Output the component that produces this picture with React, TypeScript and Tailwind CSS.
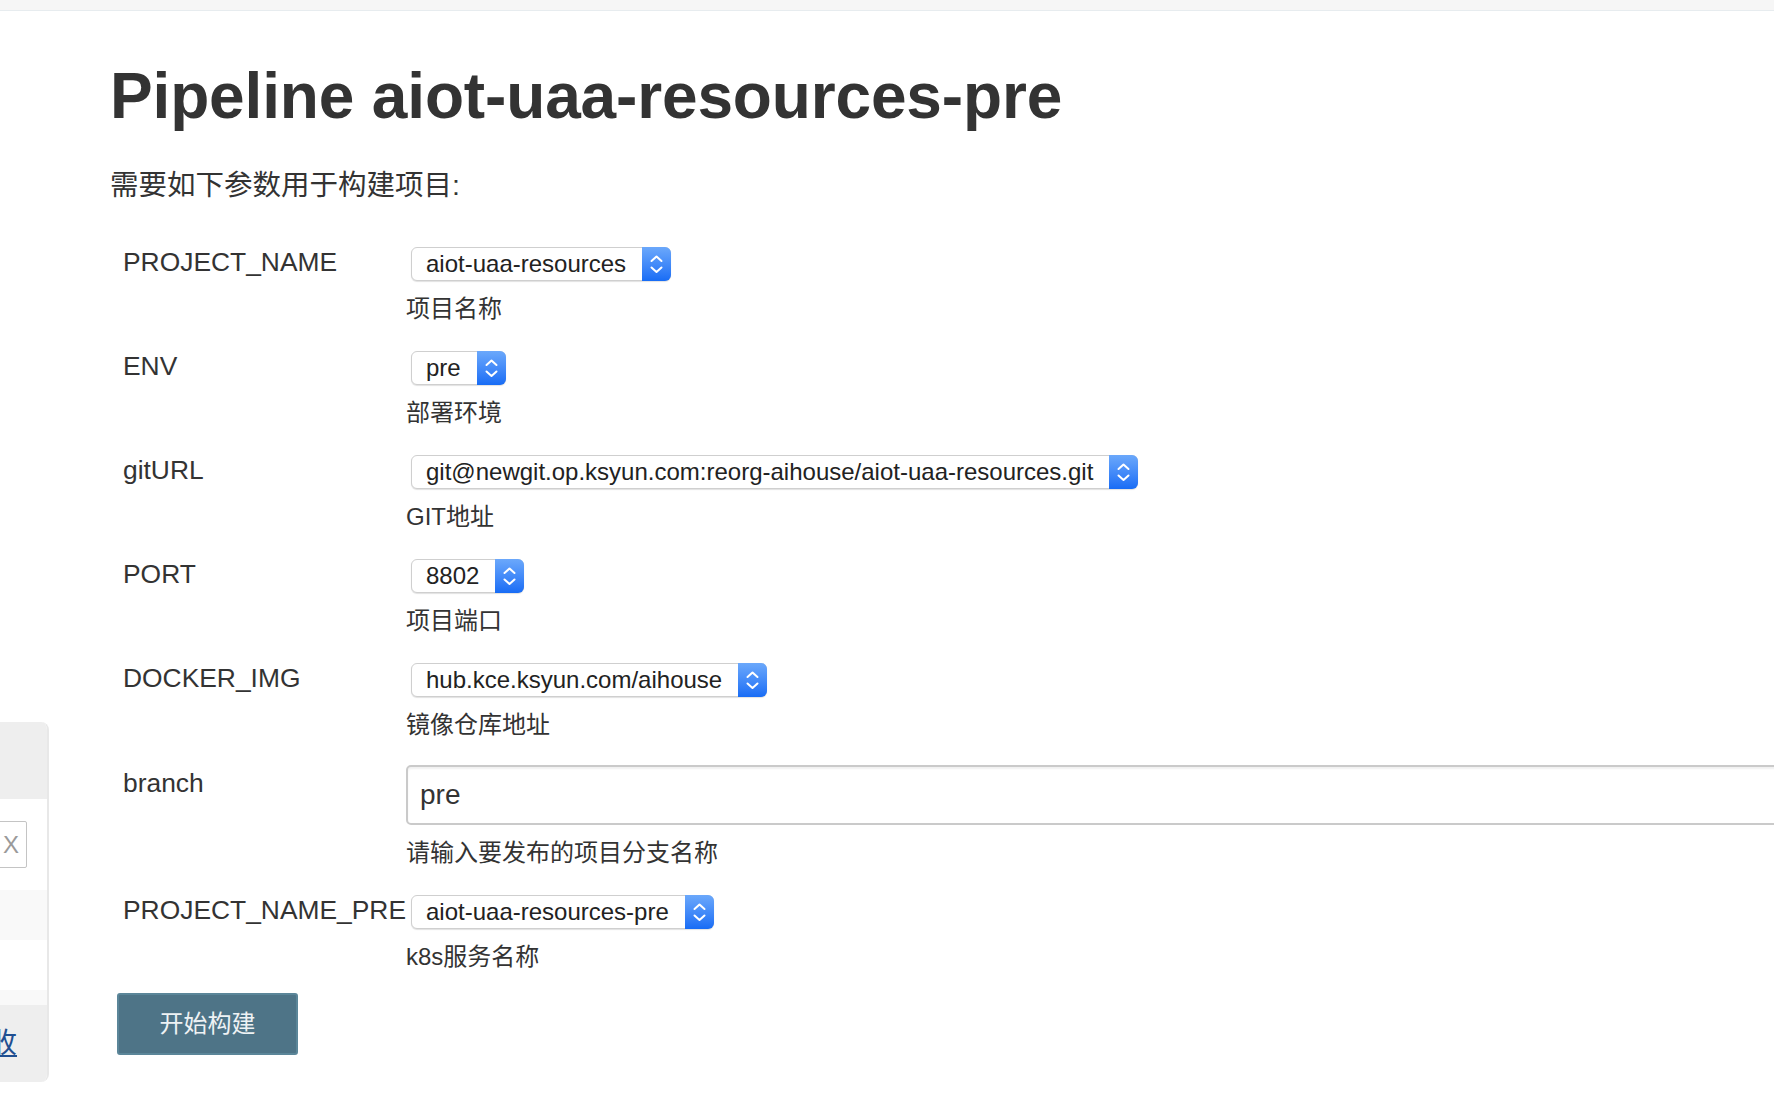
import React from 'react';

interface Param {
  name: string;
  value: string;
  desc: string;
  kind: 'select' | 'text';
}

const params: Param[] = [
  { name: 'PROJECT_NAME', value: 'aiot-uaa-resources', desc: '项目名称', kind: 'select' },
  { name: 'ENV', value: 'pre', desc: '部署环境', kind: 'select' },
  {
    name: 'gitURL',
    value: 'git@newgit.op.ksyun.com:reorg-aihouse/aiot-uaa-resources.git',
    desc: 'GIT地址',
    kind: 'select',
  },
  { name: 'PORT', value: '8802', desc: '项目端口', kind: 'select' },
  { name: 'DOCKER_IMG', value: 'hub.kce.ksyun.com/aihouse', desc: '镜像仓库地址', kind: 'select' },
  { name: 'branch', value: 'pre', desc: '请输入要发布的项目分支名称', kind: 'text' },
  { name: 'PROJECT_NAME_PRE', value: 'aiot-uaa-resources-pre', desc: 'k8s服务名称', kind: 'select' },
];

function FakeSelect({ value }: { value: string }) {
  return (
    <div className="ml-[5px] inline-flex h-[34px] items-stretch rounded-[6px] border border-[#cfcfcf] bg-white shadow-[0_1px_1px_rgba(0,0,0,0.12)]">
      <span className="whitespace-nowrap pl-[14px] pr-[16px] text-[24px] leading-[32px] text-[#222]">{value}</span>
      <span className="-my-px -mr-px flex w-[29px] items-center justify-center rounded-r-[6px] bg-gradient-to-b from-[#6ba8fb] to-[#176cf5]">
        <svg width="29" height="34" viewBox="0 0 29 34" fill="none">
          <polyline points="9.5,14 14.5,9.5 19.5,14" stroke="white" strokeWidth="2" strokeLinecap="round" strokeLinejoin="round" />
          <polyline points="9.5,20.5 14.5,25 19.5,20.5" stroke="white" strokeWidth="2" strokeLinecap="round" strokeLinejoin="round" />
        </svg>
      </span>
    </div>
  );
}

function ParamRow({ p, last }: { p: Param; last: boolean }) {
  const isText = p.kind === 'text';
  return (
    <div className={`flex ${last ? 'mb-[20px]' : 'mb-[26px]'} ${isText ? '-mt-[2px]' : ''}`}>
      <div className={`w-[296px] shrink-0 pl-[13px] text-[26.4px] leading-[30px] text-[#333] ${isText ? 'pt-[3px]' : ''}`}>
        {p.name}
      </div>
      <div className="flex flex-col items-start">
        {isText ? (
          <div className="flex h-[60px] w-[1500px] items-center rounded-[5px] border-2 border-[#cacaca] bg-white pl-[12px] text-[28px] text-[#333] shadow-[inset_0_2px_2px_rgba(0,0,0,0.06)]">
            {p.value}
          </div>
        ) : (
          <FakeSelect value={p.value} />
        )}
        <div className="mt-[12px] text-[24px] leading-[32px] text-[#333]">{p.desc}</div>
      </div>
    </div>
  );
}

function SidePanel() {
  return (
    <div className="absolute left-0 top-[722px] flex h-[360px] w-[49px] flex-col overflow-hidden rounded-r-[8px] border-r-2 border-[#e8e8e8]">
      <div className="h-[77px] bg-[#eeeeee]" />
      <div className="flex h-[91px] items-center bg-white">
        <div className="-ml-[10px] flex h-[47px] w-[37px] items-center rounded-[2px] border border-[#c4c4c4] pl-[12px] text-[24px] text-[#9a9a9a]">
          X
        </div>
      </div>
      <div className="h-[50px] bg-[#f9f9f9]" />
      <div className="h-[50px] bg-white" />
      <div className="h-[15px] bg-[#f9f9f9]" />
      <div className="flex flex-1 items-center bg-[#eeeeee]">
        <span className="-ml-[11px] text-[28px] leading-[32px] text-[#1f4f91] underline">收</span>
      </div>
    </div>
  );
}

export default function App() {
  return (
    <div className="relative h-[1104px] w-[1774px] overflow-hidden bg-white font-['Liberation_Sans','Noto_Sans_CJK_SC',sans-serif]">
      <div className="h-[11px] border-b border-[#e7ecef] bg-[#f6f6f6]" />
      <main className="pl-[110px]">
        <h1 className="mt-[53px] text-[64px] font-bold leading-[64px] tracking-[-0.15px] text-[#333]">
          Pipeline aiot-uaa-resources-pre
        </h1>
        <p className="mt-[37px] text-[28.5px] leading-[40px] text-[#333]">需要如下参数用于构建项目:</p>
        <form className="mt-[42px]">
          {params.map((p, i) => (
            <ParamRow key={p.name} p={p} last={i === params.length - 1} />
          ))}
          <button
            type="button"
            className="ml-[7px] h-[62px] w-[181px] rounded-[3px] border-2 border-[#5b8699] bg-[#4e7487] text-[24px] text-[#eef2f4]"
          >
            开始构建
          </button>
        </form>
      </main>
      <SidePanel />
    </div>
  );
}
